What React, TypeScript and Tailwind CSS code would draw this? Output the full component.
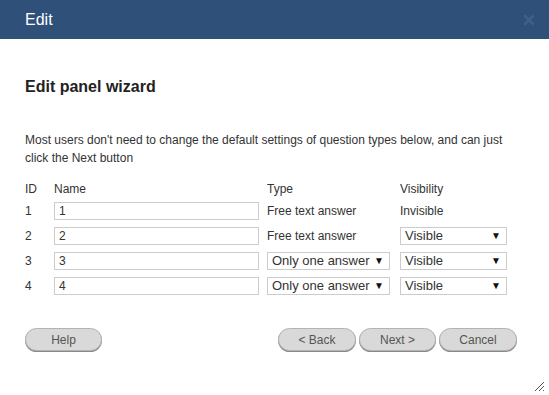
import React from 'react';

const rows = [
  { id: 1, name: '1', type: null, visibility: null },
  { id: 2, name: '2', type: null, visibility: 'Visible' },
  { id: 3, name: '3', type: 'Only one answer', visibility: 'Visible' },
  { id: 4, name: '4', type: 'Only one answer', visibility: 'Visible' },
];

const Select: React.FC<{ value: string; options: string[]; className: string }> = ({ value, options, className }) => (
  <div className={`relative h-[18px] ${className}`}>
    <select
      defaultValue={value}
      className="appearance-none w-full h-full border border-[#cccccc] bg-white pl-[4px] pr-[14px] text-[13px] leading-[16px] text-[#333] outline-none"
    >
      {options.map(o => <option key={o}>{o}</option>)}
    </select>
    <span className="absolute right-[6px] top-[3px] text-[10px] leading-[12px] text-[#111] pointer-events-none">▼</span>
  </div>
);

const Btn: React.FC<{ label: string; w: string }> = ({ label, w }) => (
  <button className={`${w} h-[23px] rounded-full bg-[#d9d9d9] border border-[#b3b3b3] shadow-[0_1px_0_#8a8a8a] text-[12px] text-[#555]`}>
    {label}
  </button>
);

export default function App() {
  return (
    <div className="w-[549px] h-[395px] bg-white relative overflow-hidden font-['Liberation_Sans',Arial,sans-serif] text-[#333]">
      <div className="h-[39px] bg-[#2e5079] flex items-center justify-between pl-[25px] pr-[14px]">
        <span className="text-white text-[16px]">Edit</span>
        <svg width="12" height="12" viewBox="0 0 12 12">
          <path d="M2 2L10 10M10 2L2 10" stroke="#3f5f86" strokeWidth="2.6" strokeLinecap="round" />
        </svg>
      </div>

      <div className="px-[25px]">
        <h2 className="mt-[38px] text-[16px] leading-[20px] font-bold text-[#222]">Edit panel wizard</h2>
        <p className="mt-[34px] text-[12px] leading-[18px] text-[#333]">
          Most users don't need to change the default settings of question types below, and can just click the Next button
        </p>

        <div className="mt-[13px] grid grid-cols-[29px_213px_133px_107px] text-[12px] text-[#333]">
          <div className="h-[18px] flex items-center">ID</div>
          <div className="h-[18px] flex items-center">Name</div>
          <div className="h-[18px] flex items-center">Type</div>
          <div className="h-[18px] flex items-center">Visibility</div>
          {rows.map(r => (
            <React.Fragment key={r.id}>
              <div className="h-[25px] flex items-center">{r.id}</div>
              <div className="h-[25px] flex items-center">
                <input
                  defaultValue={r.name}
                  className="w-[205px] h-[18px] border border-[#cccccc] px-[4px] text-[12px] text-[#333] outline-none"
                />
              </div>
              <div className="h-[25px] flex items-center">
                {r.type ? (
                  <Select value={r.type} options={['Only one answer', 'Free text answer']} className="w-[123px]" />
                ) : (
                  <span>Free text answer</span>
                )}
              </div>
              <div className="h-[25px] flex items-center">
                {r.visibility ? (
                  <Select value={r.visibility} options={['Visible', 'Invisible']} className="w-[107px]" />
                ) : (
                  <span>Invisible</span>
                )}
              </div>
            </React.Fragment>
          ))}
        </div>

        <div className="mt-[30px] flex items-center pr-[7px]">
          <Btn label="Help" w="w-[77px]" />
          <div className="ml-auto flex gap-[3px]">
            <Btn label="< Back" w="w-[78px]" />
            <Btn label="Next >" w="w-[77px]" />
            <Btn label="Cancel" w="w-[78px]" />
          </div>
        </div>
      </div>

      <svg className="absolute right-[4px] bottom-[3px]" width="12" height="12" viewBox="0 0 12 12">
        <path d="M11 2L2 11M11 6L6 11M11 10L10 11" stroke="#555" strokeWidth="1" />
      </svg>
    </div>
  );
}
